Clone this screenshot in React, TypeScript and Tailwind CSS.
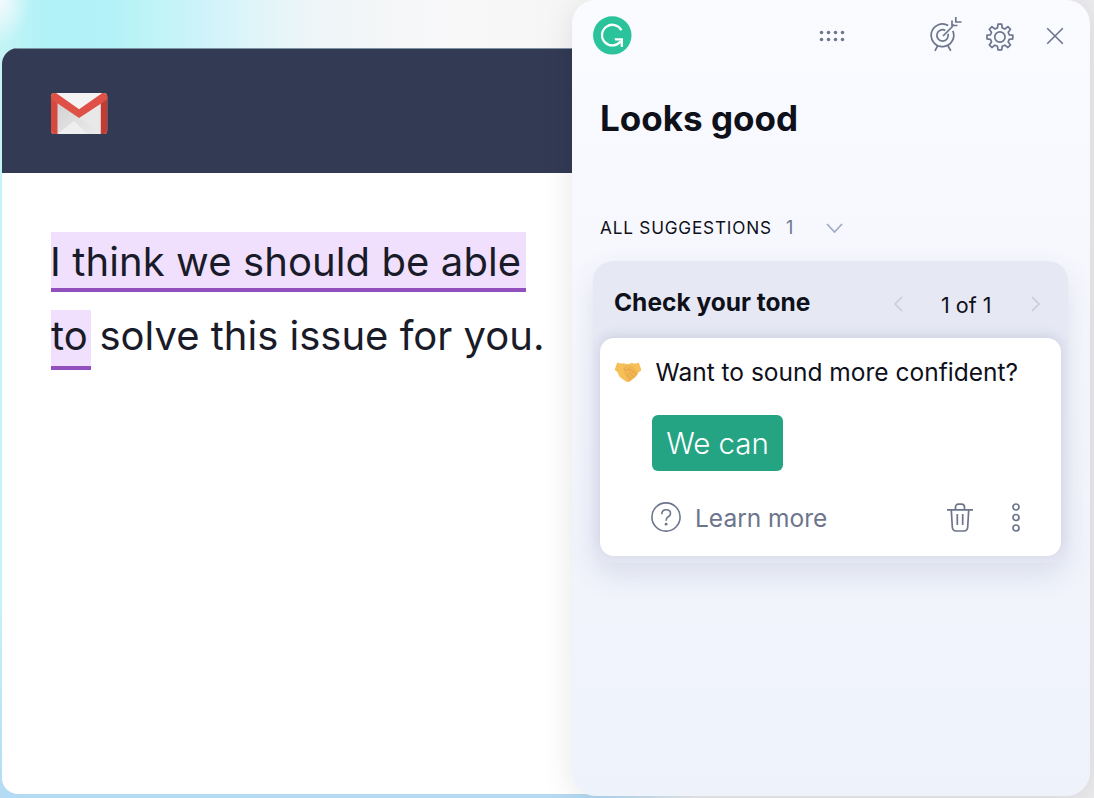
import React from "react";

function GmailIcon() {
  return (
    <svg width="57" height="42" viewBox="0 0 57 42" className="block">
      <defs>
        <linearGradient id="fold" x1="0" y1="0" x2="1" y2="1">
          <stop offset="0" stopColor="#d2d2d2" />
          <stop offset="1" stopColor="#ececec" />
        </linearGradient>
        <clipPath id="env">
          <rect x="0" y="0" width="56.2" height="41" rx="3.5" />
        </clipPath>
      </defs>
      <g clipPath="url(#env)">
        <rect width="57" height="42" fill="#e8e8e8" />
        <path d="M6 9L28.200 25L50 41H6Z" fill="url(#fold)" />
        <path d="M6.500 41L23 28L36 41Z" fill="#efefef" />
        <path d="M3 0H54L28.200 19Z" fill="#f3f3f3" />
        <path d="M0 3H6.500V41H0Z" fill="#d5493f" />
        <path d="M49.800 3H57V41H49.800Z" fill="#c13c33" />
        <path d="M0 0H5L28.100 16.300L51.300 0H57V6L28.100 25L0 6Z" fill="#df5147" />
      </g>
    </svg>
  );
}

function LogoIcon() {
  return (
    <svg width="39" height="39" viewBox="0 0 39 39" className="block">
      <circle cx="19.300" cy="19.400" r="19.200" fill="#2ac39c" />
      <path d="M28.400 14.200A10.300 10.300 0 1 0 27.600 25.200" fill="none" stroke="#fff" strokeWidth="2.300" />
      <path d="M21.500 22.200H30V30.800H27.600V24.600H22.200Z" fill="#fff" />
    </svg>
  );
}

function DragDots() {
  return (
    <svg width="26" height="12" viewBox="0 0 26 12" fill="#6d758d" className="block">
      {[2.5, 9.5, 16.5, 23.5].map((x) => (
        <g key={x}>
          <circle cx={x} cy="2.500" r="1.750" />
          <circle cx={x} cy="9.500" r="1.750" />
        </g>
      ))}
    </svg>
  );
}

function GoalIcon() {
  return (
    <svg width="32" height="36" viewBox="0 0 32 36" fill="none" stroke="#6d758d" strokeWidth="1.700" className="block">
      <path d="M18.200 9.600A11.300 11.300 0 1 0 22.800 14.800" />
      <path d="M15.200 14.400A5.700 5.700 0 1 0 18 17.800" />
      <path d="M13 20L22.500 10.500M22 4.500V9.500H27.500M22 10.500L24 8.500M25.800 1V6H31.500" />
      <path d="M7.500 30L5 34.800M18 30L20.800 34.800" />
    </svg>
  );
}

function GearIcon() {
  return (
    <svg width="28" height="28" viewBox="0 0 28 28" fill="none" stroke="#6d758d" strokeWidth="1.700" strokeLinejoin="round" className="block">
      <path d="M12.000 1.200H15.700L16.200 4.900L18.900 6L21.900 3.700L24.500 6.300L22.200 9.300L23.200 11.800L26.800 12.200V15.900L23.200 16.400L22.200 18.900L24.500 21.900L21.900 24.500L18.900 22.200L16.200 23.300L15.700 26.900H12.000L11.500 23.300L8.900 22.200L5.900 24.500L3.300 21.900L5.500 18.900L4.500 16.400L1 15.900V12.200L4.500 11.800L5.500 9.300L3.300 6.300L5.900 3.700L8.900 6L11.500 4.900Z" />
      <circle cx="13.900" cy="14" r="5.200" />
    </svg>
  );
}

function CloseIcon() {
  return (
    <svg width="18" height="18" viewBox="0 0 18 18" fill="none" stroke="#6d758d" strokeWidth="1.600" className="block">
      <path d="M1.200 1.200L16.800 16.800M16.800 1.200L1.200 16.800" />
    </svg>
  );
}

function Chevron({ d, color, w, h }: { d: string; color: string; w: number; h: number }) {
  return (
    <svg width={w} height={h} viewBox={`0 0 ${w} ${h}`} fill="none" stroke={color} strokeWidth="1.700" className="block">
      <path d={d} />
    </svg>
  );
}

function HandshakeIcon() {
  return (
    <svg width="28" height="22" viewBox="0 0 28 22" className="block">
      <path d="M3.300 1.200Q6 3 9.300 2.200L13.500 3.200L18 1.900Q22 3.400 24.800 1.600L27.300 8.800Q26.800 10.500 24.500 11.300L22.700 14.500L19.500 17.800L15 20.800Q13 21.500 11.500 20.300L5.500 15.700L3.500 11.300L0.700 8.800Z" fill="#f6bf58" />
      <path d="M12 8.300Q14.500 4 18 5.300L24 11.300L22.700 14.500L15 20.800Q12 18 11.500 14L9.500 11Q9.700 8.800 12 8.300Z" fill="#f0b450" />
      <path d="M13.500 4L9.700 8.200Q11.500 10.500 15 7.700L22.800 13.500M15 11.500L20.300 16.300M12.800 14L17.300 18.300" fill="none" stroke="#dc9f45" strokeWidth="0.800" />
    </svg>
  );
}

function HelpIcon() {
  return (
    <svg width="30" height="30" viewBox="0 0 30 30" fill="none" stroke="#6d758d" strokeWidth="1.600" className="block">
      <circle cx="15" cy="15" r="14.100" />
      <path d="M10.800 12.200Q10.800 7.700 15.200 7.700Q19.500 7.700 19.500 11.400Q19.500 13.300 17.200 14.700Q15.100 16 15.100 18.700" />
      <circle cx="15.100" cy="22.200" r="1.400" fill="#6d758d" stroke="none" />
    </svg>
  );
}

function TrashIcon() {
  return (
    <svg width="26" height="29" viewBox="0 0 26 29" fill="none" stroke="#6d758d" strokeWidth="1.700" className="block">
      <path d="M0 6.900H26M8.500 6.900V4.500Q8.500 1.200 11.500 1.200H14.500Q17.500 1.200 17.500 4.500V6.900" />
      <path d="M4.300 7L5.300 24Q5.500 28 9.500 28H16.500Q20.500 28 20.700 24L21.700 7M10.300 11V22M15.700 11V22" />
    </svg>
  );
}

function MoreIcon() {
  return (
    <svg width="8" height="29" viewBox="0 0 8 29" fill="none" stroke="#6d758d" strokeWidth="1.700" className="block">
      <circle cx="4" cy="4" r="3" />
      <circle cx="4" cy="14.500" r="3" />
      <circle cx="4" cy="25" r="3" />
    </svg>
  );
}

function MailWindow() {
  return (
    <main className="mt-[48px] ml-[2px] flex h-[746px] w-[640px] shrink-0 flex-col overflow-hidden rounded-2xl bg-white">
      <header className="flex h-[125px] shrink-0 items-start border-t border-[#7f93a3] bg-[#333a54] pt-11 pl-[49px]">
        <GmailIcon />
      </header>
      <div className="flex flex-col items-start pt-[59px] pl-[49px] text-[40px] leading-[60px] font-[370] whitespace-nowrap text-[#1a1b29]">
        <span className="h-[60px] w-[475px] border-b-4 border-[#9150be] bg-[#f1e0fd] indent-[-1px] tracking-[0.1px]">
          I think we should be able
        </span>
        <div className="mt-[18px] flex h-[60px] leading-[52px]">
          <span className="h-[60px] w-[39.5px] border-b-4 border-[#9150be] bg-[#f1e0fd]">to</span>
          <span className="ml-[9px]">solve this issue for you.</span>
        </div>
      </div>
    </main>
  );
}

function ToneCard() {
  return (
    <section className="ml-[21px] flex h-[302px] w-[475px] flex-col rounded-[20px] bg-[#e6e8f4] px-[7px] shadow-[0_12px_28px_rgba(64,75,120,0.13)]">
      <div className="flex h-[77px] shrink-0 pl-[14px]">
        <h2 className="w-[279px] pt-[25px] text-[24.5px] leading-[32px] font-bold whitespace-nowrap">Check your tone</h2>
        <div className="pt-[35px]">
          <Chevron w={10} h={16} d="M9 1L2 8L9 15" color="#cbcddf" />
        </div>
        <span className="ml-[38px] w-[53px] pt-[28px] text-[21.5px] leading-[32px] whitespace-nowrap">1 of 1</span>
        <div className="ml-[37px] pt-[35px]">
          <Chevron w={10} h={16} d="M1 1L8 8L1 15" color="#cbcddf" />
        </div>
      </div>
      <div className="h-[218px] w-[461px] rounded-[14px] bg-white shadow-[0_-2px_12px_rgba(64,75,120,0.16)]">
        <div className="flex pt-[18px] pl-[14px]">
          <div className="pt-[5px]">
            <HandshakeIcon />
          </div>
          <p className="ml-[13.500px] text-[24.5px] leading-[32px] whitespace-nowrap">Want to sound more confident?</p>
        </div>
        <button className="mt-[27px] ml-[52px] flex h-[56px] w-[131px] items-center justify-center rounded-[6px] bg-[#24a483] pb-[1px] text-[29.5px] leading-[40px] font-[350] whitespace-nowrap text-white">
          We can
        </button>
        <div className="mt-[30px] flex h-[32px] items-center pl-[51px] text-[#6d758d]">
          <HelpIcon />
          <span className="ml-[14px] w-[252px] pt-[2px] text-[24.5px] leading-[32px] whitespace-nowrap">Learn more</span>
          <TrashIcon />
          <div className="ml-[39px]">
            <MoreIcon />
          </div>
        </div>
      </div>
    </section>
  );
}

function AssistantPanel() {
  return (
    <aside className="relative -ml-[70px] h-[796px] w-[518px] shrink-0 rounded-[24px] bg-linear-to-b from-[#fafbff] via-[#f5f6fd] to-[#eef2fb] text-[#0e101a] shadow-[0_4px_32px_rgba(0,0,0,0.1)]">
      <div className="flex h-[72px]">
        <div className="w-[247px] pt-[16px] pl-[21px]">
          <LogoIcon />
        </div>
        <div className="w-[111px] pt-[30px]">
          <DragDots />
        </div>
        <div className="w-[56px] pt-[16px]">
          <GoalIcon />
        </div>
        <div className="w-[60px] pt-[23px]">
          <GearIcon />
        </div>
        <div className="pt-[27px]">
          <CloseIcon />
        </div>
      </div>
      <h1 className="pt-[24px] pl-[28px] text-[35px] leading-[44px] font-bold whitespace-nowrap">Looks good</h1>
      <div className="mt-[72px] flex h-[49px] pl-[28px] text-[18px] leading-[32px] whitespace-nowrap">
        <span className="w-[186px] text-[17.2px] tracking-[0.8px]">ALL SUGGESTIONS</span>
        <span className="w-[40px] text-[#6d758d]">1</span>
        <div className="pt-[11px]">
          <Chevron w={17} h={11} d="M1 1L8.500 9L16 1" color="#a3aac6" />
        </div>
      </div>
      <ToneCard />
    </aside>
  );
}

export default function App() {
  return (
    <div className="flex h-[798px] w-[1094px] overflow-hidden bg-[radial-gradient(ellipse_30px_45px_at_0px_0px,#f5fafd_0%,transparent_100%),linear-gradient(90deg,transparent_600px,#ececef_700px),linear-gradient(to_bottom,transparent_60px,transparent_600px,#b5daf4_798px),linear-gradient(90deg,#c4f4f6_0px,#aff2f8_50px,#b3f2f8_110px,#c0f4f7_160px,#cdf3f9_200px,#def5fa_250px,#ebf5f8_300px,#f3f6f8_360px,#f8f8f9_450px,#f6f6f6_572px)] font-[Inter,sans-serif]">
      <MailWindow />
      <AssistantPanel />
    </div>
  );
}
